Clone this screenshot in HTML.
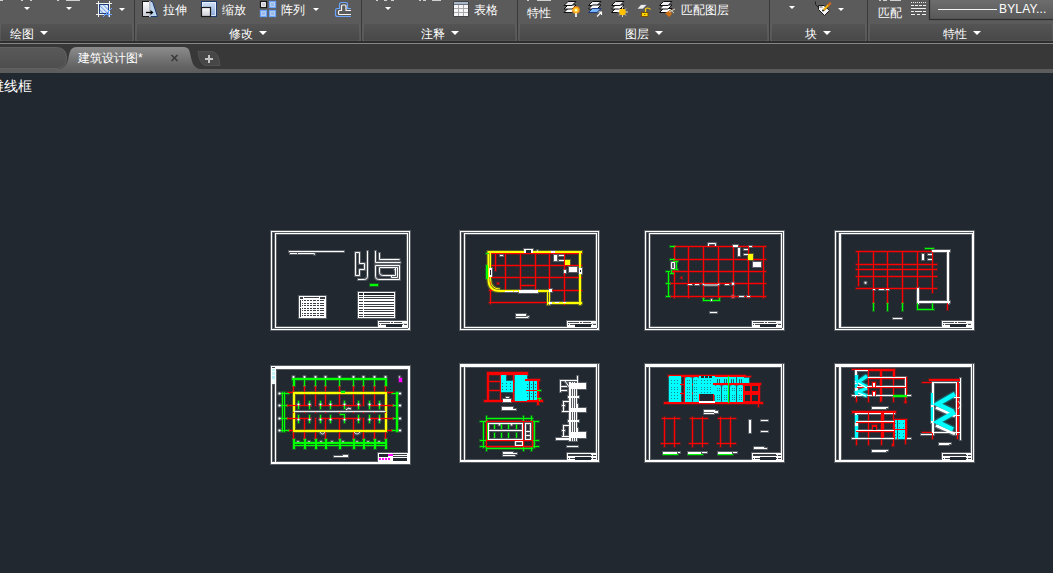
<!DOCTYPE html>
<html><head><meta charset="utf-8">
<style>
*{margin:0;padding:0;box-sizing:border-box}
html,body{width:1053px;height:573px;overflow:hidden;background:#212830;font-family:"Liberation Sans",sans-serif;position:relative}
.a{position:absolute}
.rib{left:0;top:0;width:1053px;height:41px;background:#5b5b5b}
.tb{top:24px;height:17px;background:linear-gradient(#545454,#484848);box-shadow:inset 1px 0 0 rgba(255,255,255,0.07),inset -1px 0 0 rgba(255,255,255,0.07),inset 0 -1px 0 rgba(255,255,255,0.06)}
.sep{top:0;width:1px;height:41px;background:#3a3a3a}
.sepl{top:24px;width:1px;height:17px;background:#5e5e5e}
.t{color:#fff;font-size:12px;line-height:12px;white-space:nowrap}
.arr{width:0;height:0;border-left:4px solid transparent;border-right:4px solid transparent;border-top:4px solid #fff}
.sarr{width:0;height:0;border-left:3px solid transparent;border-right:3px solid transparent;border-top:3px solid #fff}
</style></head><body>
<!-- ribbon -->
<div class="a rib"></div>
<div class="a tb" style="left:0;width:133px"></div>
<div class="a tb" style="left:136px;width:224px"></div>
<div class="a tb" style="left:363px;width:153px"></div>
<div class="a tb" style="left:519px;width:249px"></div>
<div class="a tb" style="left:771px;width:95px"></div>
<div class="a tb" style="left:869px;width:184px"></div>
<div class="a sep" style="left:134px"></div>
<div class="a sep" style="left:361px"></div>
<div class="a sep" style="left:517px"></div>
<div class="a sep" style="left:769px"></div>
<div class="a sep" style="left:867px"></div>

<!-- ribbon labels -->
<div class="a t" style="left:10px;top:28px">绘图</div><div class="a arr" style="left:40px;top:31px"></div>
<div class="a t" style="left:229px;top:28px">修改</div><div class="a arr" style="left:259px;top:31px"></div>
<div class="a t" style="left:421px;top:28px">注释</div><div class="a arr" style="left:451px;top:31px"></div>
<div class="a t" style="left:625px;top:28px">图层</div><div class="a arr" style="left:655px;top:31px"></div>
<div class="a t" style="left:805px;top:28px">块</div><div class="a arr" style="left:823px;top:31px"></div>
<div class="a t" style="left:943px;top:28px">特性</div><div class="a arr" style="left:973px;top:31px"></div>
<!-- ribbon buttons text -->
<div class="a t" style="left:163px;top:4px">拉伸</div>
<div class="a t" style="left:222px;top:4px">缩放</div>
<div class="a t" style="left:281px;top:4px">阵列</div>
<div class="a t" style="left:474px;top:4px">表格</div>
<div class="a t" style="left:681px;top:4px">匹配图层</div>
<div class="a t" style="left:527px;top:7px">特性</div>
<div class="a t" style="left:878px;top:7px">匹配</div>
<!-- small arrows -->
<div class="a sarr" style="left:24px;top:7px"></div>
<div class="a sarr" style="left:66px;top:7px"></div>
<div class="a sarr" style="left:119px;top:8px"></div>
<div class="a sarr" style="left:313px;top:8px"></div>
<div class="a sarr" style="left:385px;top:7px"></div>
<div class="a sarr" style="left:789px;top:6px"></div>
<div class="a sarr" style="left:838px;top:8px"></div>
<!-- icons -->
<svg class="a" style="left:0;top:0" width="1053" height="24" viewBox="0 0 1053 24">
<defs>
<linearGradient id="gw" x1="0" y1="0" x2="0" y2="1"><stop offset="0" stop-color="#ffffff"/><stop offset="1" stop-color="#c9ccd4"/></linearGradient>
<linearGradient id="gb" x1="0" y1="0" x2="0" y2="1"><stop offset="0" stop-color="#d4e2f4"/><stop offset="1" stop-color="#86a8dc"/></linearGradient>
<linearGradient id="gdd" x1="0" y1="0" x2="0" y2="1"><stop offset="0" stop-color="#6e6e6e"/><stop offset="1" stop-color="#585858"/></linearGradient>
<pattern id="hp" width="3" height="3" patternUnits="userSpaceOnUse" patternTransform="rotate(-45)"><rect width="3" height="3" fill="#f4f4f4"/><rect width="1.3" height="3" fill="#78a8f0"/></pattern>
</defs>
<!-- top fragments -->
<g fill="#d0d0d0">
<rect x="0" y="0" width="3" height="1"/><rect x="21" y="0" width="2" height="1"/><rect x="30" y="0" width="2" height="1"/><rect x="57" y="0" width="2" height="1"/><rect x="66" y="0" width="14" height="1"/>
<rect x="376" y="0" width="2" height="1"/><rect x="384" y="0" width="3" height="1"/><rect x="391" y="0" width="3" height="1"/><rect x="419" y="0" width="2" height="1"/><rect x="423" y="0" width="3" height="1"/><rect x="432" y="0" width="9" height="1"/>
<rect x="527" y="0" width="2" height="1"/><rect x="537" y="0" width="14" height="1"/>
<rect x="879" y="0" width="2" height="1"/><rect x="883" y="0" width="4" height="1"/><rect x="890" y="0" width="11" height="1"/>
</g>
<!-- hatch -->
<rect x="99.5" y="4.5" width="9" height="9" fill="url(#hp)" stroke="#1d3f7a" stroke-width="1"/>
<g stroke="#f2f2f2" stroke-width="1.2" shape-rendering="crispEdges">
<path d="M98.5 1 V17 M109.5 1 V17 M96 3.5 H112 M96 14.5 H112"/>
</g>
<path d="M103 17 L112 8" stroke="#6aa4ff" stroke-width="1"/>
<path d="M108.5 10 V17 M104 14.5 H112" stroke="#6aa4ff" stroke-width="1"/>
<!-- stretch -->
<rect x="142.5" y="1.5" width="7" height="15" fill="url(#gw)" stroke="#1a1a1a" stroke-width="1"/>
<path d="M150 1.5 H152.5 L157.5 16.5 H150 Z" fill="#bcd4ee" stroke="#1d3a70" stroke-width="1"/>
<rect x="149.3" y="1" width="1.2" height="16" fill="#fff"/>
<path d="M146 12.5 H151" stroke="#000" stroke-width="1.3"/>
<path d="M150.5 10 L153.5 12.5 L150.5 15 Z" fill="#000"/>
<!-- scale -->
<rect x="201.5" y="1.5" width="15" height="15" fill="url(#gb)" stroke="#1d3a70" stroke-width="1"/>
<rect x="202.5" y="2.5" width="13" height="13" fill="none" stroke="#eef4ff" stroke-width="0.8"/>
<rect x="201.5" y="7.5" width="9" height="9" fill="url(#gw)" stroke="#1a1a1a" stroke-width="1.2"/>
<!-- array -->
<rect x="260.5" y="1.5" width="6" height="6" fill="#fff" stroke="#1a1a1a" stroke-width="1.2"/>
<rect x="262" y="3" width="3" height="3" fill="#c8ccd4"/>
<g fill="#c4d8f2" stroke="#6aa2ff" stroke-width="1.3">
<rect x="269.5" y="1.5" width="6" height="6"/><rect x="260.5" y="10.5" width="6" height="6"/><rect x="269.5" y="10.5" width="6" height="6"/>
</g>
<g fill="#98b8e6"><rect x="271" y="3" width="3" height="3"/><rect x="262" y="12" width="3" height="3"/><rect x="271" y="12" width="3" height="3"/></g>
<!-- offset -->
<path d="M351 8.5 H347.5 V4.5 Q347.5 2.5 345.5 2.5 H341.5 Q339.5 2.5 339.5 4.5 V8.5 H337.5 Q335.5 8.5 335.5 10.5 V14.5 Q335.5 16.5 337.5 16.5 H351" fill="none" stroke="#6aa4ff" stroke-width="1.2"/>
<path d="M351 10.5 H346 V6 Q346 5 345 5 H342.5 Q341.5 5 341.5 6 V10.5 H339.5 Q338.5 10.5 338.5 11.5 V13.5 Q338.5 14.5 339.5 14.5 H351" fill="none" stroke="#f4f4f4" stroke-width="1.2"/>
<!-- table -->
<rect x="453.5" y="1.5" width="15" height="15" fill="#2a2e36"/>
<rect x="454" y="2" width="14" height="2.5" fill="#a9b5c9"/>
<rect x="454" y="5" width="14" height="11" fill="#a8a8a8"/>
<g fill="#f6f6f8">
<rect x="454" y="5" width="4" height="3"/><rect x="459" y="5" width="4" height="3"/><rect x="464" y="5" width="4" height="3"/>
<rect x="454" y="9" width="4" height="3"/><rect x="459" y="9" width="4" height="3"/><rect x="464" y="9" width="4" height="3"/>
<rect x="454" y="13" width="4" height="3"/><rect x="459" y="13" width="4" height="3"/><rect x="464" y="13" width="4" height="3"/>
</g>
<!-- layer 1 -->
<g stroke="#111" stroke-width="1">
<path d="M564 12.5 L568 8.5 H576 L572 12.5 Z" fill="#fff"/>
<path d="M564 9 L568 5 H576 L572 9 Z" fill="#fff"/>
<path d="M564 5.5 L568 1.5 H576 L572 5.5 Z" fill="#e8e8ee"/>
</g>
<circle cx="576" cy="10" r="3.2" fill="#ffd030" stroke="#f08a10" stroke-width="1.2"/>
<circle cx="576" cy="10.3" r="1" fill="#fff"/>
<rect x="575.2" y="13" width="1.6" height="4" fill="#fff"/>
<!-- layer 2 -->
<g stroke="#111" stroke-width="1">
<path d="M588.5 5.5 L592.5 1.5 H601 L597 5.5 Z" fill="#eef0f4"/>
<path d="M588.5 9 L592.5 5 H601 L597 9 Z" fill="#fff"/>
</g>
<path d="M588.5 12.5 L592.5 8.5 H601 L597 12.5 Z" fill="#78b4f4" stroke="#1d3a80" stroke-width="1"/>
<path d="M597 16.5 L601.5 12 M598.5 12 H601.5 V15" stroke="#fff" stroke-width="1.1" fill="none"/>
<!-- layer 3 sun -->
<g stroke="#111" stroke-width="1">
<path d="M611.5 12.5 L615.5 8.5 H624 L620 12.5 Z" fill="#fff"/>
<path d="M611.5 9 L615.5 5 H624 L620 9 Z" fill="#fff"/>
<path d="M611.5 5.5 L615.5 1.5 H624 L620 5.5 Z" fill="#eef0f4"/>
</g>
<path d="M622.5 6.5 V17 M617.5 12 H628 M619 8.5 L626 15.5 M626 8.5 L619 15.5" stroke="#f0f0f0" stroke-width="0.8"/>
<circle cx="622.5" cy="12" r="3.3" fill="#ffc000"/>
<!-- layer 4 lock -->
<path d="M637 9 L641 4.5 H647 L643 9 Z" fill="#eeeeee" stroke="#4a5060" stroke-width="0.6"/>
<rect x="641.5" y="12.5" width="6.5" height="4" fill="#ffd800" stroke="#7a5000" stroke-width="1"/>
<path d="M645.5 12 V9 Q645.5 8 647.5 8 Q649.5 8 650.5 9.5" stroke="#ffd000" stroke-width="1.2" fill="none"/>
<rect x="644.3" y="14" width="1" height="1" fill="#553300"/>
<!-- layer 5 brush -->
<g stroke="#111" stroke-width="1">
<path d="M659.5 12.5 L663.5 8.5 H672 L668 12.5 Z" fill="#fff"/>
<path d="M659.5 9 L663.5 5 H672 L668 9 Z" fill="#fff"/>
<path d="M659.5 5.5 L663.5 1.5 H672 L668 5.5 Z" fill="#eef0f4"/>
</g>
<path d="M665 13 L670 10.5 L672 14 L669 17 Z" fill="#d07010"/>
<path d="M669 12 L675 9 M670 9.5 L674 13" stroke="#f0e0c0" stroke-width="0.9"/>
<!-- block edit -->
<path d="M815.5 1.5 V4.5 L818.5 7.5" stroke="#222" stroke-width="1" fill="none"/>
<path d="M818.5 5.5 H824 L829.5 10.5 L824.5 15.5 L818.5 9.5 Z" fill="#f6f6f6" stroke="#1a1a1a" stroke-width="1"/>
<path d="M819.5 7 H822.5" stroke="#555" stroke-width="1"/>
<path d="M823.8 9.8 L828.6 5" stroke="#ffb800" stroke-width="2"/>
<path d="M823.8 11 L829.6 5.2" stroke="#8a5a10" stroke-width="0.7"/>
<path d="M828.2 5.4 L830.8 2.8" stroke="#d0681a" stroke-width="2.4"/>
<circle cx="823" cy="10.5" r="0.9" fill="#111"/>
<!-- linetype -->
<g fill="#eeeeee">
<rect x="911" y="2" width="1" height="1"/><rect x="913" y="2" width="1" height="1"/><rect x="915" y="2" width="1" height="1"/><rect x="917" y="2" width="1" height="1"/><rect x="919" y="2" width="1" height="1"/><rect x="921" y="2" width="1" height="1"/><rect x="923" y="2" width="1" height="1"/><rect x="925" y="2" width="1" height="1"/>
<rect x="911" y="5" width="3" height="1"/><rect x="915" y="5" width="3" height="1"/><rect x="919" y="5" width="3" height="1"/><rect x="923" y="5" width="3" height="1"/>
<rect x="911" y="8" width="15" height="1"/>
<rect x="911" y="11" width="3" height="1"/><rect x="915" y="11" width="7" height="1"/><rect x="923" y="11" width="3" height="1"/>
<rect x="911" y="14" width="4" height="1"/><rect x="917" y="14" width="3" height="1"/><rect x="922" y="14" width="4" height="1"/>
</g>
<!-- dropdown -->
<rect x="929.5" y="-1" width="130" height="20.5" fill="url(#gdd)" stroke="#2c2c2c" stroke-width="1.2"/>
<rect x="938" y="9" width="59" height="1" fill="#f4f4f4"/>
</svg>
<div class="a" style="left:999px;top:3px;color:#fff;font-size:12px;line-height:12px;letter-spacing:0.15px">BYLAY...</div>
<!-- bottom lines -->
<div class="a" style="left:0;top:41px;width:1053px;height:2px;background:#2e2e2e"></div>
<div class="a" style="left:0;top:43px;width:1053px;height:1px;background:#858585"></div>
<div class="a" style="left:0;top:44px;width:1053px;height:25px;background:#383838"></div>
<div class="a" style="left:0;top:69px;width:1053px;height:4px;background:#5c5c5c"></div>
<!-- tabs -->
<svg class="a" style="left:0;top:44px" width="240" height="29" viewBox="0 44 240 29">
<defs>
<linearGradient id="tg" x1="0" y1="0" x2="0" y2="1"><stop offset="0" stop-color="#8c8c8c"/><stop offset="0.75" stop-color="#646464"/><stop offset="1" stop-color="#5c5c5c"/></linearGradient>
<linearGradient id="tg2" x1="0" y1="0" x2="0" y2="1"><stop offset="0" stop-color="#595959"/><stop offset="1" stop-color="#4e4e4e"/></linearGradient>
</defs>
<path d="M-10 47.5 H56 Q66.5 47.5 66.5 58 Q66.5 68.5 56 68.5 H-10 Z" fill="url(#tg2)" stroke="#626262" stroke-width="1"/>
<path d="M56 69.5 Q66 69 68 60 Q69.5 51 71.5 49 Q73 47 77 47 H184 Q189 47 190 53 Q191 59 193 64 Q196 69 202 69.5 L202 73 H56 Z" fill="url(#tg)"/>
<path d="M198 51.5 H212 Q219 52 220 65.5 H205 Q199 63 198 51.5 Z" fill="#474747" stroke="#555" stroke-width="0.8"/>
<rect x="205" y="58" width="8" height="2" fill="#c4c4c4"/>
<rect x="208" y="55" width="2" height="8" fill="#c4c4c4"/>
<path d="M171.5 55 L177.5 61 M177.5 55 L171.5 61" stroke="#3a3a3a" stroke-width="1.6"/>
</svg>
<div class="a t" style="left:78px;top:52px">建筑设计图*</div>
<!-- canvas -->
<div class="a t" style="left:-10px;top:79px;font-size:14px;line-height:14px">维线框</div>
<!--DRAW--><svg class="a" style="left:0;top:0" width="1053" height="573" viewBox="0 0 1053 573"><defs><filter id="soft" x="-2%" y="-2%" width="104%" height="104%" color-interpolation-filters="sRGB"><feMorphology in="SourceGraphic" operator="dilate" radius="0.5" result="d"/><feComponentTransfer in="d" result="e"><feFuncA type="linear" slope="0.25"/></feComponentTransfer><feMerge><feMergeNode in="e"/><feMergeNode in="SourceGraphic"/></feMerge></filter></defs><g filter="url(#soft)"><rect x="271" y="231" width="139" height="1" fill="#ffffff"/><rect x="271" y="329" width="139" height="1" fill="#ffffff"/><rect x="271" y="231" width="1" height="99" fill="#ffffff"/><rect x="409" y="231" width="1" height="99" fill="#ffffff"/><rect x="275" y="233" width="133" height="1" fill="#ffffff"/><rect x="275" y="327" width="133" height="1" fill="#ffffff"/><rect x="275" y="233" width="1" height="95" fill="#ffffff"/><rect x="407" y="233" width="1" height="95" fill="#ffffff"/><rect x="408" y="328" width="1" height="1" fill="#ffffff"/><rect x="378" y="321" width="30" height="7" fill="#ffffff"/><rect x="379" y="322" width="11" height="1" fill="#4a4f55"/><rect x="391" y="322" width="2" height="1" fill="#4a4f55"/><rect x="394" y="322" width="8" height="1" fill="#4a4f55"/><rect x="379" y="324" width="1" height="1" fill="#4a4f55"/><rect x="381" y="324" width="5" height="1" fill="#4a4f55"/><rect x="386" y="324" width="16" height="3" fill="#212830"/><rect x="402" y="324" width="1" height="1" fill="#4a4f55"/><rect x="404" y="324" width="3" height="1" fill="#4a4f55"/><rect x="403" y="323" width="4" height="1" fill="#e0e0e0"/><rect x="289" y="251" width="55" height="1" fill="#ffffff"/><rect x="290" y="253" width="7" height="1" fill="#ffffff"/><rect x="298" y="253" width="16" height="1" fill="#ffffff"/><circle cx="314.5" cy="254" r="0.7" fill="#ffffff"/><path d="M355.5 252.5 H359.5 V263.5 H364.5 V269.5 H359.5 V275.5 H355.5 Z" fill="none" stroke="#ffffff" stroke-width="1"/><path d="M367.5 251 V276.5 Q367.5 279.5 364.5 279.5 H358" fill="none" stroke="#ffffff" stroke-width="1"/><path d="M375.5 251 V262.5 H400.5" fill="none" stroke="#ffffff" stroke-width="1"/><path d="M379.5 253 V259.5 H399.5" fill="none" stroke="#ffffff" stroke-width="1"/><path d="M375.5 265.5 H399.5 V279.5 H378.5 Q375.5 279.5 375.5 276.5 Z" fill="none" stroke="#ffffff" stroke-width="1"/><path d="M379.5 267.5 H395.5 V275.5 H382.5 Q379.5 275.5 379.5 272.5 Z" fill="none" stroke="#ffffff" stroke-width="1"/><path d="M391.5 275.5 V277.5 H397.5 V267.5 H395.5" fill="none" stroke="#ffffff" stroke-width="1"/><circle cx="395.3" cy="269.6" r="0.9" fill="#ffffff"/><rect x="370" y="284" width="8" height="2" fill="#00ff00"/><rect x="299" y="296" width="27" height="22" fill="#ffffff"/><rect x="300" y="297" width="3" height="2" fill="#3a3f46"/><rect x="304" y="297" width="6" height="1" fill="#3a3f46"/><rect x="310" y="297" width="9" height="1" fill="#3a3f46"/><rect x="320" y="297" width="5" height="2" fill="#3a3f46"/><rect x="302" y="300" width="1" height="1" fill="#3a3f46"/><rect x="304" y="300" width="2" height="1" fill="#3a3f46"/><rect x="307" y="300" width="2" height="1" fill="#3a3f46"/><rect x="310" y="300" width="2" height="1" fill="#3a3f46"/><rect x="313" y="300" width="3" height="1" fill="#3a3f46"/><rect x="317" y="300" width="2" height="1" fill="#3a3f46"/><rect x="320" y="300" width="4" height="1" fill="#3a3f46"/><rect x="302" y="303" width="1" height="1" fill="#3a3f46"/><rect x="304" y="303" width="2" height="1" fill="#3a3f46"/><rect x="307" y="303" width="2" height="1" fill="#3a3f46"/><rect x="310" y="303" width="2" height="1" fill="#3a3f46"/><rect x="313" y="303" width="3" height="1" fill="#3a3f46"/><rect x="317" y="303" width="2" height="1" fill="#3a3f46"/><rect x="320" y="303" width="4" height="1" fill="#3a3f46"/><rect x="302" y="305" width="1" height="1" fill="#3a3f46"/><rect x="304" y="305" width="2" height="1" fill="#3a3f46"/><rect x="307" y="305" width="2" height="1" fill="#3a3f46"/><rect x="310" y="305" width="2" height="1" fill="#3a3f46"/><rect x="313" y="305" width="3" height="1" fill="#3a3f46"/><rect x="317" y="305" width="2" height="1" fill="#3a3f46"/><rect x="320" y="305" width="4" height="1" fill="#3a3f46"/><rect x="302" y="308" width="1" height="1" fill="#3a3f46"/><rect x="304" y="308" width="2" height="1" fill="#3a3f46"/><rect x="307" y="308" width="2" height="1" fill="#3a3f46"/><rect x="310" y="308" width="2" height="1" fill="#3a3f46"/><rect x="313" y="308" width="3" height="1" fill="#3a3f46"/><rect x="317" y="308" width="2" height="1" fill="#3a3f46"/><rect x="320" y="308" width="4" height="1" fill="#3a3f46"/><rect x="302" y="310" width="1" height="1" fill="#3a3f46"/><rect x="304" y="310" width="2" height="1" fill="#3a3f46"/><rect x="307" y="310" width="2" height="1" fill="#3a3f46"/><rect x="310" y="310" width="2" height="1" fill="#3a3f46"/><rect x="313" y="310" width="3" height="1" fill="#3a3f46"/><rect x="317" y="310" width="2" height="1" fill="#3a3f46"/><rect x="320" y="310" width="4" height="1" fill="#3a3f46"/><rect x="302" y="313" width="1" height="1" fill="#3a3f46"/><rect x="304" y="313" width="2" height="1" fill="#3a3f46"/><rect x="307" y="313" width="2" height="1" fill="#3a3f46"/><rect x="310" y="313" width="2" height="1" fill="#3a3f46"/><rect x="313" y="313" width="3" height="1" fill="#3a3f46"/><rect x="317" y="313" width="2" height="1" fill="#3a3f46"/><rect x="320" y="313" width="4" height="1" fill="#3a3f46"/><rect x="302" y="315" width="1" height="1" fill="#3a3f46"/><rect x="304" y="315" width="2" height="1" fill="#3a3f46"/><rect x="307" y="315" width="2" height="1" fill="#3a3f46"/><rect x="310" y="315" width="2" height="1" fill="#3a3f46"/><rect x="313" y="315" width="3" height="1" fill="#3a3f46"/><rect x="317" y="315" width="2" height="1" fill="#3a3f46"/><rect x="320" y="315" width="4" height="1" fill="#3a3f46"/><rect x="300" y="300" width="1" height="7" fill="#3a3f46"/><rect x="300" y="308" width="1" height="9" fill="#3a3f46"/><rect x="358" y="292" width="37" height="26" fill="#ffffff"/><rect x="359" y="293" width="4" height="2" fill="#212830"/><rect x="364" y="293" width="30" height="2" fill="#212830"/><rect x="359" y="296" width="4" height="1" fill="#3a3f46"/><rect x="364" y="296" width="30" height="1" fill="#3a3f46"/><rect x="359" y="298" width="4" height="1" fill="#3a3f46"/><rect x="364" y="298" width="30" height="1" fill="#3a3f46"/><rect x="359" y="301" width="4" height="1" fill="#3a3f46"/><rect x="364" y="301" width="30" height="1" fill="#3a3f46"/><rect x="359" y="304" width="4" height="1" fill="#3a3f46"/><rect x="364" y="304" width="30" height="1" fill="#3a3f46"/><rect x="359" y="306" width="4" height="1" fill="#3a3f46"/><rect x="364" y="306" width="30" height="1" fill="#3a3f46"/><rect x="359" y="309" width="4" height="1" fill="#3a3f46"/><rect x="364" y="309" width="30" height="1" fill="#3a3f46"/><rect x="359" y="311" width="4" height="1" fill="#3a3f46"/><rect x="364" y="311" width="30" height="1" fill="#3a3f46"/><rect x="359" y="314" width="4" height="1" fill="#3a3f46"/><rect x="364" y="314" width="30" height="1" fill="#3a3f46"/><rect x="359" y="316" width="4" height="1" fill="#3a3f46"/><rect x="364" y="316" width="30" height="1" fill="#3a3f46"/><rect x="460" y="231" width="139" height="1" fill="#ffffff"/><rect x="460" y="329" width="139" height="1" fill="#ffffff"/><rect x="460" y="231" width="1" height="99" fill="#ffffff"/><rect x="598" y="231" width="1" height="99" fill="#ffffff"/><rect x="464" y="233" width="133" height="1" fill="#ffffff"/><rect x="464" y="327" width="133" height="1" fill="#ffffff"/><rect x="464" y="233" width="1" height="95" fill="#ffffff"/><rect x="596" y="233" width="1" height="95" fill="#ffffff"/><rect x="597" y="328" width="1" height="1" fill="#ffffff"/><rect x="567" y="321" width="30" height="7" fill="#ffffff"/><rect x="568" y="322" width="11" height="1" fill="#4a4f55"/><rect x="580" y="322" width="2" height="1" fill="#4a4f55"/><rect x="583" y="322" width="8" height="1" fill="#4a4f55"/><rect x="568" y="324" width="1" height="1" fill="#4a4f55"/><rect x="570" y="324" width="5" height="1" fill="#4a4f55"/><rect x="575" y="324" width="16" height="3" fill="#212830"/><rect x="591" y="324" width="1" height="1" fill="#4a4f55"/><rect x="593" y="324" width="3" height="1" fill="#4a4f55"/><rect x="592" y="323" width="4" height="1" fill="#e0e0e0"/><rect x="489" y="253" width="93" height="1" fill="#ff0000"/><rect x="489" y="265" width="93" height="1" fill="#ff0000"/><rect x="489" y="277" width="93" height="1" fill="#ff0000"/><rect x="489" y="290" width="93" height="1" fill="#ff0000"/><rect x="489" y="302" width="59" height="1" fill="#ff0000"/><rect x="505" y="253" width="1" height="38" fill="#ff0000"/><rect x="520" y="253" width="1" height="38" fill="#ff0000"/><rect x="535" y="253" width="1" height="38" fill="#ff0000"/><rect x="490" y="253" width="1" height="51" fill="#ff0000"/><rect x="495" y="253" width="1" height="18" fill="#ff0000"/><rect x="549" y="253" width="1" height="52" fill="#ff0000"/><rect x="564" y="253" width="1" height="52" fill="#ff0000"/><rect x="520" y="285" width="16" height="1" fill="#ff0000"/><rect x="488" y="251" width="94" height="2" fill="#ffff00"/><rect x="579" y="251" width="2" height="54" fill="#ffff00"/><rect x="547" y="302" width="35" height="2" fill="#ffff00"/><rect x="547" y="290" width="1" height="15" fill="#ffff00"/><rect x="549" y="290" width="1" height="15" fill="#ffff00"/><rect x="500" y="290" width="49" height="2" fill="#ffff00"/><path d="M488.5 251 V279 Q488.5 291 500 291" fill="none" stroke="#ffff00" stroke-width="2"/><path d="M490.5 253 V279 Q490.5 289 500 289" fill="none" stroke="#ffff00" stroke-width="1"/><rect x="486" y="265" width="2" height="14" fill="#00ff00"/><rect x="486" y="253" width="3" height="1" fill="#00ff00"/><rect x="524" y="249" width="9" height="4" fill="#ffffff"/><rect x="526" y="250" width="5" height="3" fill="#212830"/><circle cx="537.5" cy="251" r="0.8" fill="#ffffff"/><rect x="551" y="251" width="4" height="2" fill="#ffffff"/><rect x="500" y="255" width="3" height="1" fill="#ffffff"/><rect x="489" y="268" width="3" height="9" fill="#ffffff"/><rect x="490" y="270" width="1" height="5" fill="#212830"/><rect x="505" y="291" width="8" height="1" fill="#ffffff"/><rect x="514" y="291" width="4" height="1" fill="#ffffff"/><rect x="519" y="290" width="19" height="3" fill="#ffffff"/><rect x="549" y="289" width="3" height="3" fill="#ffffff"/><rect x="549" y="302" width="3" height="2" fill="#ffffff"/><rect x="555" y="302" width="4" height="1" fill="#ffffff"/><rect x="563" y="302" width="3" height="1" fill="#ffffff"/><rect x="554" y="255" width="3" height="6" fill="#ffffff"/><rect x="559" y="255" width="5" height="1" fill="#ffffff"/><rect x="559" y="260" width="5" height="1" fill="#ffffff"/><rect x="565" y="260" width="5" height="5" fill="#ffff00"/><rect x="569" y="267" width="8" height="5" fill="#ffffff"/><rect x="564" y="270" width="2" height="3" fill="#ffffff"/><rect x="579" y="268" width="3" height="6" fill="#ffffff"/><rect x="580" y="270" width="1" height="2" fill="#212830"/><circle cx="498" cy="283.5" r="1" fill="#ff0000"/><rect x="516" y="314" width="10" height="2" fill="#ffffff"/><rect x="516" y="317" width="12" height="1" fill="#ffffff"/><path d="M526 317.5 L529 316.5" fill="none" stroke="#ffffff" stroke-width="1"/><rect x="645" y="231" width="139" height="1" fill="#ffffff"/><rect x="645" y="329" width="139" height="1" fill="#ffffff"/><rect x="645" y="231" width="1" height="99" fill="#ffffff"/><rect x="783" y="231" width="1" height="99" fill="#ffffff"/><rect x="649" y="233" width="133" height="1" fill="#ffffff"/><rect x="649" y="327" width="133" height="1" fill="#ffffff"/><rect x="649" y="233" width="1" height="95" fill="#ffffff"/><rect x="781" y="233" width="1" height="95" fill="#ffffff"/><rect x="782" y="328" width="1" height="1" fill="#ffffff"/><rect x="752" y="321" width="30" height="7" fill="#ffffff"/><rect x="753" y="322" width="11" height="1" fill="#4a4f55"/><rect x="765" y="322" width="2" height="1" fill="#4a4f55"/><rect x="768" y="322" width="8" height="1" fill="#4a4f55"/><rect x="753" y="324" width="1" height="1" fill="#4a4f55"/><rect x="755" y="324" width="5" height="1" fill="#4a4f55"/><rect x="760" y="324" width="16" height="3" fill="#212830"/><rect x="776" y="324" width="1" height="1" fill="#4a4f55"/><rect x="778" y="324" width="3" height="1" fill="#4a4f55"/><rect x="777" y="323" width="4" height="1" fill="#e0e0e0"/><rect x="671" y="246" width="95" height="1" fill="#ff0000"/><rect x="671" y="259" width="95" height="1" fill="#ff0000"/><rect x="671" y="271" width="95" height="1" fill="#ff0000"/><rect x="671" y="283" width="95" height="1" fill="#ff0000"/><rect x="671" y="296" width="95" height="1" fill="#ff0000"/><rect x="674" y="246" width="1" height="52" fill="#ff0000"/><rect x="688" y="246" width="1" height="52" fill="#ff0000"/><rect x="703" y="246" width="1" height="52" fill="#ff0000"/><rect x="718" y="246" width="1" height="52" fill="#ff0000"/><rect x="733" y="246" width="1" height="52" fill="#ff0000"/><rect x="748" y="246" width="1" height="52" fill="#ff0000"/><rect x="763" y="246" width="1" height="52" fill="#ff0000"/><rect x="670" y="246" width="5" height="1" fill="#00ff00"/><rect x="670" y="259" width="5" height="1" fill="#00ff00"/><rect x="668" y="271" width="1" height="26" fill="#00ff00"/><rect x="666" y="271" width="4" height="1" fill="#00ff00"/><rect x="666" y="283" width="4" height="1" fill="#00ff00"/><rect x="666" y="296" width="4" height="1" fill="#00ff00"/><path d="M671.5 262.5 H674.5 V268.5 H671.5 Z" fill="none" stroke="#ffffff" stroke-width="1"/><rect x="676" y="261" width="1" height="9" fill="#00ff00"/><rect x="673" y="261" width="5" height="1" fill="#00ff00"/><rect x="673" y="269" width="5" height="1" fill="#00ff00"/><rect x="670" y="273" width="4" height="1" fill="#00ff00"/><rect x="671" y="270" width="1" height="4" fill="#00ff00"/><rect x="703" y="300" width="17" height="1" fill="#00ff00"/><rect x="703" y="298" width="1" height="3" fill="#00ff00"/><rect x="719" y="298" width="1" height="3" fill="#00ff00"/><rect x="711" y="299" width="1" height="2" fill="#ffffff"/><path d="M708.5 246 V243.5 H715.5 V246" fill="none" stroke="#ffffff" stroke-width="1"/><rect x="688" y="284" width="4" height="1" fill="#ffffff"/><rect x="695" y="284" width="4" height="1" fill="#ffffff"/><path d="M703 283.5 Q703 285 705 285 H717 Q719 285 719 283.5" fill="none" stroke="#ffffff" stroke-width="1.2"/><circle cx="681.5" cy="277.8" r="1" fill="#ff0000"/><rect x="725" y="284" width="4" height="1" fill="#ffffff"/><circle cx="733" cy="283.8" r="1.2" fill="#ffffff"/><rect x="739" y="296" width="5" height="1" fill="#ffffff"/><rect x="747" y="296" width="3" height="1" fill="#ffffff"/><circle cx="733" cy="296.5" r="1.3" fill="none" stroke="#ff6060" stroke-width="0.8"/><rect x="748" y="254" width="5" height="6" fill="#ffff00"/><rect x="753" y="262" width="8" height="5" fill="#ffffff"/><rect x="738" y="248" width="2" height="8" fill="#ffffff"/><rect x="744" y="249" width="4" height="1" fill="#ffffff"/><rect x="744" y="254" width="4" height="1" fill="#ffffff"/><rect x="733" y="245" width="5" height="2" fill="#ffffff"/><rect x="749" y="246" width="3" height="1" fill="#ffffff"/><rect x="710" y="312" width="7" height="1" fill="#ffffff"/><rect x="835" y="231" width="139" height="1" fill="#ffffff"/><rect x="835" y="329" width="139" height="1" fill="#ffffff"/><rect x="835" y="231" width="1" height="99" fill="#ffffff"/><rect x="973" y="231" width="1" height="99" fill="#ffffff"/><rect x="839" y="233" width="134" height="1" fill="#ffffff"/><rect x="839" y="327" width="134" height="1" fill="#ffffff"/><rect x="839" y="233" width="1" height="95" fill="#ffffff"/><rect x="972" y="233" width="1" height="95" fill="#ffffff"/><rect x="840" y="233" width="1" height="95" fill="#ffffff"/><rect x="972" y="328" width="1" height="1" fill="#ffffff"/><rect x="942" y="321" width="30" height="7" fill="#ffffff"/><rect x="943" y="322" width="11" height="1" fill="#4a4f55"/><rect x="955" y="322" width="2" height="1" fill="#4a4f55"/><rect x="958" y="322" width="8" height="1" fill="#4a4f55"/><rect x="943" y="324" width="1" height="1" fill="#4a4f55"/><rect x="945" y="324" width="5" height="1" fill="#4a4f55"/><rect x="950" y="324" width="16" height="3" fill="#212830"/><rect x="966" y="324" width="1" height="1" fill="#4a4f55"/><rect x="968" y="324" width="3" height="1" fill="#4a4f55"/><rect x="967" y="323" width="4" height="1" fill="#e0e0e0"/><rect x="856" y="251" width="81" height="1" fill="#ff0000"/><rect x="856" y="264" width="81" height="1" fill="#ff0000"/><rect x="856" y="269" width="81" height="1" fill="#ff0000"/><rect x="856" y="276" width="81" height="1" fill="#ff0000"/><rect x="856" y="288" width="81" height="1" fill="#ff0000"/><rect x="858" y="251" width="1" height="35" fill="#ff0000"/><rect x="873" y="251" width="1" height="52" fill="#ff0000"/><rect x="873" y="303" width="1" height="8" fill="#00ff00"/><rect x="887" y="251" width="1" height="52" fill="#ff0000"/><rect x="887" y="303" width="1" height="8" fill="#00ff00"/><rect x="902" y="251" width="1" height="52" fill="#ff0000"/><rect x="902" y="303" width="1" height="8" fill="#00ff00"/><rect x="917" y="251" width="1" height="42" fill="#ff0000"/><rect x="932" y="251" width="1" height="42" fill="#ff0000"/><circle cx="865.5" cy="282.8" r="1" fill="#ffffff"/><rect x="873" y="289" width="2" height="1" fill="#ffffff"/><rect x="879" y="289" width="5" height="1" fill="#ffffff"/><rect x="886" y="289" width="3" height="1" fill="#ffffff"/><rect x="893" y="318" width="9" height="1" fill="#ffffff"/><rect x="932" y="250" width="18" height="2" fill="#ffffff"/><rect x="947" y="250" width="2" height="54" fill="#ffffff"/><rect x="917" y="301" width="33" height="2" fill="#ffffff"/><rect x="917" y="288" width="2" height="16" fill="#ffffff"/><rect x="925" y="248" width="9" height="1" fill="#00ff00"/><rect x="917" y="309" width="17" height="1" fill="#00ff00"/><rect x="917" y="303" width="1" height="7" fill="#00ff00"/><rect x="932" y="303" width="1" height="7" fill="#00ff00"/><rect x="947" y="303" width="1" height="7" fill="#ff0000"/><rect x="922" y="254" width="2" height="6" fill="#ffffff"/><rect x="928" y="254" width="4" height="1" fill="#ffffff"/><rect x="928" y="259" width="4" height="1" fill="#ffffff"/><rect x="271" y="366" width="139" height="3" fill="#ffffff"/><rect x="271" y="366" width="1" height="98" fill="#ffffff"/><rect x="275" y="366" width="1" height="98" fill="#ffffff"/><rect x="272" y="369" width="3" height="15" fill="#f0fafa"/><rect x="272" y="367" width="3" height="1" fill="#40484f"/><rect x="272" y="369" width="3" height="2" fill="#c8f4f8"/><rect x="272" y="372" width="3" height="3" fill="#c8f4f8"/><rect x="272" y="376" width="3" height="3" fill="#b0f0f4"/><rect x="408" y="366" width="2" height="98" fill="#ffffff"/><rect x="271" y="462" width="139" height="2" fill="#ffffff"/><rect x="292" y="378" width="95" height="2" fill="#00ff00"/><rect x="293" y="378" width="2" height="8" fill="#00ff00"/><circle cx="293.5" cy="377" r="1.1" fill="#ffffff"/><rect x="293" y="386" width="1" height="20" fill="#ff0000"/><rect x="293" y="418" width="1" height="23" fill="#ff0000"/><rect x="304" y="378" width="1" height="8" fill="#00ff00"/><circle cx="304.5" cy="377" r="1.1" fill="#ffffff"/><rect x="304" y="386" width="1" height="20" fill="#ff0000"/><rect x="304" y="418" width="1" height="23" fill="#ff0000"/><rect x="315" y="378" width="1" height="8" fill="#00ff00"/><circle cx="315.5" cy="377" r="1.1" fill="#ffffff"/><rect x="315" y="386" width="1" height="20" fill="#ff0000"/><rect x="315" y="418" width="1" height="23" fill="#ff0000"/><rect x="325" y="378" width="1" height="8" fill="#00ff00"/><circle cx="325.5" cy="377" r="1.1" fill="#ffffff"/><rect x="325" y="386" width="1" height="20" fill="#ff0000"/><rect x="325" y="418" width="1" height="23" fill="#ff0000"/><rect x="339" y="378" width="1" height="8" fill="#00ff00"/><circle cx="339.5" cy="377" r="1.1" fill="#ffffff"/><rect x="339" y="386" width="1" height="20" fill="#ff0000"/><rect x="339" y="418" width="1" height="23" fill="#ff0000"/><rect x="353" y="378" width="1" height="8" fill="#00ff00"/><circle cx="353.5" cy="377" r="1.1" fill="#ffffff"/><rect x="353" y="386" width="1" height="20" fill="#ff0000"/><rect x="353" y="418" width="1" height="23" fill="#ff0000"/><rect x="363" y="378" width="1" height="8" fill="#00ff00"/><circle cx="363.5" cy="377" r="1.1" fill="#ffffff"/><rect x="363" y="386" width="1" height="20" fill="#ff0000"/><rect x="363" y="418" width="1" height="23" fill="#ff0000"/><rect x="374" y="378" width="1" height="8" fill="#00ff00"/><circle cx="374.5" cy="377" r="1.1" fill="#ffffff"/><rect x="374" y="386" width="1" height="20" fill="#ff0000"/><rect x="374" y="418" width="1" height="23" fill="#ff0000"/><rect x="385" y="378" width="2" height="8" fill="#00ff00"/><circle cx="385.5" cy="377" r="1.1" fill="#ffffff"/><rect x="385" y="386" width="1" height="20" fill="#ff0000"/><rect x="385" y="418" width="1" height="23" fill="#ff0000"/><rect x="293" y="392" width="94" height="2" fill="#ffff00"/><rect x="293" y="430" width="94" height="2" fill="#ffff00"/><rect x="293" y="392" width="2" height="40" fill="#ffff00"/><rect x="385" y="392" width="2" height="40" fill="#ffff00"/><rect x="288" y="392" width="5" height="1" fill="#ff0000"/><rect x="387" y="392" width="6" height="1" fill="#ff0000"/><rect x="288" y="430" width="5" height="1" fill="#ff0000"/><rect x="387" y="430" width="6" height="1" fill="#ff0000"/><rect x="282" y="392" width="1" height="40" fill="#00ff00"/><rect x="284" y="392" width="1" height="40" fill="#00ff00"/><rect x="396" y="392" width="2" height="40" fill="#00ff00"/><rect x="279" y="393" width="10" height="1" fill="#00ff00"/><rect x="392" y="393" width="8" height="1" fill="#00ff00"/><circle cx="279.5" cy="393.5" r="1.1" fill="#ffffff"/><circle cx="400" cy="393.5" r="1.1" fill="#ffffff"/><rect x="279" y="405" width="10" height="1" fill="#00ff00"/><rect x="392" y="405" width="8" height="1" fill="#00ff00"/><circle cx="279.5" cy="405.5" r="1.1" fill="#ffffff"/><circle cx="400" cy="405.5" r="1.1" fill="#ffffff"/><rect x="279" y="418" width="10" height="1" fill="#00ff00"/><rect x="392" y="418" width="8" height="1" fill="#00ff00"/><circle cx="279.5" cy="418.5" r="1.1" fill="#ffffff"/><circle cx="400" cy="418.5" r="1.1" fill="#ffffff"/><rect x="279" y="430" width="10" height="1" fill="#00ff00"/><rect x="392" y="430" width="8" height="1" fill="#00ff00"/><circle cx="279.5" cy="430.5" r="1.1" fill="#ffffff"/><circle cx="400" cy="430.5" r="1.1" fill="#ffffff"/><rect x="287" y="405" width="24" height="1" fill="#ff0000"/><rect x="319" y="405" width="42" height="1" fill="#ff0000"/><rect x="369" y="405" width="24" height="1" fill="#ff0000"/><rect x="287" y="418" width="24" height="1" fill="#ff0000"/><rect x="319" y="418" width="42" height="1" fill="#ff0000"/><rect x="369" y="418" width="24" height="1" fill="#ff0000"/><rect x="294" y="411" width="92" height="1" fill="#e8e8e8"/><rect x="293" y="412" width="1" height="1" fill="#ff0000"/><rect x="304" y="412" width="1" height="1" fill="#ff0000"/><rect x="315" y="412" width="1" height="1" fill="#ff0000"/><rect x="325" y="412" width="1" height="1" fill="#ff0000"/><rect x="339" y="412" width="1" height="1" fill="#ff0000"/><rect x="353" y="412" width="1" height="1" fill="#ff0000"/><rect x="363" y="412" width="1" height="1" fill="#ff0000"/><rect x="374" y="412" width="1" height="1" fill="#ff0000"/><rect x="385" y="412" width="1" height="1" fill="#ff0000"/><rect x="298" y="401" width="1" height="8" fill="#00ff00"/><rect x="298" y="415" width="1" height="8" fill="#00ff00"/><circle cx="298.5" cy="404.5" r="1.1" fill="#ffffff"/><circle cx="298.5" cy="419.5" r="1.1" fill="#ffffff"/><rect x="309" y="401" width="1" height="8" fill="#00ff00"/><rect x="309" y="415" width="1" height="8" fill="#00ff00"/><circle cx="309.5" cy="404.5" r="1.1" fill="#ffffff"/><circle cx="309.5" cy="419.5" r="1.1" fill="#ffffff"/><rect x="320" y="401" width="1" height="8" fill="#00ff00"/><rect x="320" y="415" width="1" height="8" fill="#00ff00"/><circle cx="320.5" cy="404.5" r="1.1" fill="#ffffff"/><circle cx="320.5" cy="419.5" r="1.1" fill="#ffffff"/><rect x="330" y="401" width="1" height="8" fill="#00ff00"/><rect x="330" y="415" width="1" height="8" fill="#00ff00"/><circle cx="330.5" cy="404.5" r="1.1" fill="#ffffff"/><circle cx="330.5" cy="419.5" r="1.1" fill="#ffffff"/><rect x="344" y="401" width="1" height="8" fill="#00ff00"/><rect x="344" y="415" width="1" height="8" fill="#00ff00"/><circle cx="344.5" cy="404.5" r="1.1" fill="#ffffff"/><circle cx="344.5" cy="419.5" r="1.1" fill="#ffffff"/><rect x="358" y="401" width="1" height="8" fill="#00ff00"/><rect x="358" y="415" width="1" height="8" fill="#00ff00"/><circle cx="358.5" cy="404.5" r="1.1" fill="#ffffff"/><circle cx="358.5" cy="419.5" r="1.1" fill="#ffffff"/><rect x="369" y="401" width="1" height="8" fill="#00ff00"/><rect x="369" y="415" width="1" height="8" fill="#00ff00"/><circle cx="369.5" cy="404.5" r="1.1" fill="#ffffff"/><circle cx="369.5" cy="419.5" r="1.1" fill="#ffffff"/><rect x="379" y="401" width="1" height="8" fill="#00ff00"/><rect x="379" y="415" width="1" height="8" fill="#00ff00"/><circle cx="379.5" cy="404.5" r="1.1" fill="#ffffff"/><circle cx="379.5" cy="419.5" r="1.1" fill="#ffffff"/><path d="M320 432 Q322.5 436 325 432" fill="none" stroke="#ffffff" stroke-width="0.8"/><path d="M354 432 Q357 436 360 432" fill="none" stroke="#ffffff" stroke-width="0.8"/><rect x="341" y="391" width="4" height="2" fill="#00ff00"/><rect x="340" y="414" width="5" height="1" fill="#00ff00"/><path d="M346 410 Q348 407 351 409" fill="none" stroke="#ffffff" stroke-width="1"/><rect x="399" y="378" width="3" height="4" fill="#ff00ff"/><circle cx="399.5" cy="377" r="0.8" fill="#ffffff"/><rect x="293" y="442" width="94" height="2" fill="#00ff00"/><rect x="293" y="445" width="94" height="1" fill="#00ff00"/><rect x="293" y="439" width="2" height="10" fill="#00ff00"/><rect x="304" y="439" width="2" height="10" fill="#00ff00"/><rect x="315" y="439" width="2" height="10" fill="#00ff00"/><rect x="325" y="439" width="2" height="10" fill="#00ff00"/><rect x="339" y="439" width="2" height="10" fill="#00ff00"/><rect x="353" y="439" width="2" height="10" fill="#00ff00"/><rect x="363" y="439" width="2" height="10" fill="#00ff00"/><rect x="374" y="439" width="2" height="10" fill="#00ff00"/><rect x="385" y="439" width="2" height="10" fill="#00ff00"/><circle cx="298" cy="441.5" r="0.7" fill="#ffffff"/><circle cx="309" cy="441.5" r="0.7" fill="#ffffff"/><circle cx="321" cy="441.5" r="0.7" fill="#ffffff"/><circle cx="332" cy="441.5" r="0.7" fill="#ffffff"/><circle cx="343" cy="441.5" r="0.7" fill="#ffffff"/><circle cx="357" cy="441.5" r="0.7" fill="#ffffff"/><circle cx="368" cy="441.5" r="0.7" fill="#ffffff"/><circle cx="379" cy="441.5" r="0.7" fill="#ffffff"/><rect x="334" y="456" width="10" height="1" fill="#ffffff"/><rect x="343" y="455" width="5" height="2" fill="#ffffff"/><rect x="378" y="453" width="30" height="9" fill="#ffffff"/><rect x="379" y="454" width="9" height="3" fill="#212830"/><rect x="388" y="454" width="5" height="2" fill="#ff00ff"/><rect x="393" y="454" width="14" height="1" fill="#3a3f46"/><rect x="393" y="456" width="14" height="1" fill="#3a3f46"/><rect x="379" y="458" width="2" height="2" fill="#ff00ff"/><rect x="382" y="458" width="2" height="2" fill="#ff00ff"/><rect x="385" y="458" width="2" height="2" fill="#ff00ff"/><rect x="388" y="458" width="2" height="2" fill="#ff00ff"/><rect x="393" y="458" width="14" height="3" fill="#212830"/><rect x="460" y="364" width="139" height="3" fill="#ffffff"/><rect x="460" y="364" width="1" height="98" fill="#ffffff"/><rect x="464" y="364" width="1" height="98" fill="#ffffff"/><rect x="596" y="364" width="1" height="98" fill="#ffffff"/><rect x="598" y="364" width="1" height="98" fill="#ffffff"/><rect x="597" y="364" width="1" height="98" fill="#5a5e64"/><rect x="460" y="460" width="139" height="2" fill="#ffffff"/><rect x="567" y="453" width="30" height="8" fill="#ffffff"/><rect x="568" y="454" width="10" height="2" fill="#3a3f46"/><rect x="578" y="454" width="4" height="2" fill="#3a3f46"/><rect x="582" y="454" width="9" height="2" fill="#3a3f46"/><rect x="591" y="455" width="1" height="1" fill="#3a3f46"/><rect x="593" y="455" width="3" height="1" fill="#3a3f46"/><rect x="575" y="457" width="16" height="3" fill="#212830"/><rect x="568" y="458" width="1" height="1" fill="#3a3f46"/><rect x="570" y="458" width="5" height="1" fill="#3a3f46"/><rect x="591" y="458" width="1" height="1" fill="#3a3f46"/><rect x="593" y="458" width="3" height="1" fill="#3a3f46"/><rect x="487" y="372" width="41" height="3" fill="#ff0000"/><rect x="487" y="372" width="2" height="30" fill="#ff0000"/><rect x="484" y="400" width="59" height="2" fill="#ff0000"/><rect x="488" y="381" width="39" height="1" fill="#ff0000"/><rect x="488" y="390" width="39" height="1" fill="#ff0000"/><rect x="500" y="374" width="1" height="27" fill="#ff0000"/><rect x="513" y="374" width="1" height="27" fill="#ff0000"/><rect x="501" y="375" width="5" height="7" fill="#00ffff"/><rect x="501" y="381" width="12" height="11" fill="#00ffff"/><rect x="515" y="375" width="12" height="26" fill="#00ffff"/><rect x="525" y="379" width="15" height="2" fill="#ff0000"/><rect x="526" y="381" width="3" height="19" fill="#00ffff"/><rect x="530" y="381" width="3" height="19" fill="#00ffff"/><rect x="534" y="381" width="3" height="19" fill="#00ffff"/><rect x="526" y="390" width="12" height="1" fill="#ff0000"/><rect x="537" y="380" width="2" height="25" fill="#ff0000"/><rect x="537" y="390" width="4" height="1" fill="#00ff00"/><rect x="537" y="398" width="4" height="1" fill="#00ff00"/><rect x="539" y="398" width="1" height="3" fill="#00ff00"/><rect x="503" y="399" width="8" height="3" fill="#ffffff"/><rect x="506" y="397" width="3" height="1" fill="#ffffff"/><rect x="502" y="383" width="1" height="1" fill="#1a6a70"/><rect x="506" y="383" width="1" height="1" fill="#1a6a70"/><rect x="510" y="383" width="1" height="1" fill="#1a6a70"/><rect x="502" y="386" width="1" height="1" fill="#1a6a70"/><rect x="506" y="386" width="1" height="1" fill="#1a6a70"/><rect x="510" y="386" width="1" height="1" fill="#1a6a70"/><rect x="502" y="389" width="1" height="1" fill="#1a6a70"/><rect x="506" y="389" width="1" height="1" fill="#1a6a70"/><rect x="510" y="389" width="1" height="1" fill="#1a6a70"/><rect x="527" y="384" width="1" height="1" fill="#1a6a70"/><rect x="527" y="387" width="1" height="1" fill="#1a6a70"/><rect x="527" y="393" width="1" height="1" fill="#1a6a70"/><rect x="527" y="396" width="1" height="1" fill="#1a6a70"/><rect x="531" y="384" width="1" height="1" fill="#1a6a70"/><rect x="531" y="387" width="1" height="1" fill="#1a6a70"/><rect x="531" y="393" width="1" height="1" fill="#1a6a70"/><rect x="531" y="396" width="1" height="1" fill="#1a6a70"/><rect x="535" y="384" width="1" height="1" fill="#1a6a70"/><rect x="535" y="387" width="1" height="1" fill="#1a6a70"/><rect x="535" y="393" width="1" height="1" fill="#1a6a70"/><rect x="535" y="396" width="1" height="1" fill="#1a6a70"/><rect x="502" y="407" width="11" height="3" fill="#ffffff"/><rect x="513" y="409" width="3" height="1" fill="#ffffff"/><rect x="486" y="418" width="47" height="1" fill="#00ff00"/><rect x="486" y="416" width="1" height="6" fill="#00ff00"/><rect x="523" y="416" width="1" height="6" fill="#00ff00"/><rect x="531" y="416" width="1" height="6" fill="#00ff00"/><rect x="486" y="448" width="47" height="1" fill="#00ff00"/><rect x="486" y="446" width="1" height="5" fill="#00ff00"/><rect x="523" y="446" width="1" height="5" fill="#00ff00"/><rect x="531" y="446" width="1" height="5" fill="#00ff00"/><rect x="483" y="421" width="1" height="27" fill="#00ff00"/><rect x="534" y="421" width="1" height="27" fill="#00ff00"/><rect x="480" y="421" width="7" height="1" fill="#00ff00"/><rect x="532" y="421" width="7" height="1" fill="#00ff00"/><rect x="480" y="440" width="7" height="1" fill="#00ff00"/><rect x="532" y="440" width="7" height="1" fill="#00ff00"/><rect x="480" y="446" width="7" height="1" fill="#00ff00"/><rect x="532" y="446" width="7" height="1" fill="#00ff00"/><rect x="486" y="421" width="47" height="1" fill="#ff0000"/><rect x="486" y="446" width="47" height="1" fill="#ff0000"/><rect x="486" y="421" width="1" height="26" fill="#ff0000"/><rect x="532" y="421" width="1" height="26" fill="#ff0000"/><rect x="486" y="440" width="47" height="1" fill="#ff0000"/><rect x="523" y="421" width="1" height="26" fill="#ff0000"/><rect x="488" y="423" width="35" height="1" fill="#ffffff"/><rect x="488" y="439" width="35" height="1" fill="#ffffff"/><rect x="488" y="423" width="1" height="17" fill="#ffffff"/><rect x="522" y="423" width="1" height="17" fill="#ffffff"/><rect x="488" y="430" width="35" height="1" fill="#ffffff"/><rect x="525" y="423" width="6" height="1" fill="#ffffff"/><rect x="525" y="439" width="6" height="1" fill="#ffffff"/><rect x="525" y="423" width="1" height="17" fill="#ffffff"/><rect x="530" y="423" width="1" height="17" fill="#ffffff"/><rect x="525" y="431" width="6" height="1" fill="#ffffff"/><rect x="525" y="435" width="6" height="1" fill="#ffffff"/><rect x="494" y="424" width="1" height="5" fill="#00ff00"/><rect x="494" y="433" width="1" height="5" fill="#00ff00"/><rect x="501" y="424" width="1" height="5" fill="#00ff00"/><rect x="501" y="433" width="1" height="5" fill="#00ff00"/><rect x="508" y="424" width="1" height="5" fill="#00ff00"/><rect x="508" y="433" width="1" height="5" fill="#00ff00"/><rect x="516" y="424" width="1" height="5" fill="#00ff00"/><rect x="516" y="433" width="1" height="5" fill="#00ff00"/><circle cx="499.5" cy="424.5" r="0.9" fill="#ffffff"/><circle cx="511.5" cy="424.5" r="0.9" fill="#ffffff"/><rect x="515" y="441" width="8" height="1" fill="#ffffff"/><rect x="515" y="445" width="8" height="1" fill="#ffffff"/><rect x="515" y="441" width="1" height="5" fill="#ffffff"/><rect x="522" y="441" width="1" height="5" fill="#ffffff"/><rect x="487" y="423" width="1" height="17" fill="#00ff00"/><rect x="503" y="452" width="10" height="2" fill="#ffffff"/><rect x="503" y="455" width="12" height="1" fill="#ffffff"/><rect x="513" y="453" width="4" height="1" fill="#ffffff"/><rect x="569" y="382" width="2" height="59" fill="#ffffff"/><rect x="572" y="382" width="1" height="59" fill="#ffffff"/><rect x="574" y="382" width="1" height="59" fill="#ffffff"/><rect x="576" y="388" width="1" height="53" fill="#ffffff"/><rect x="570" y="383" width="16" height="6" fill="#ffffff"/><rect x="570" y="408" width="16" height="4" fill="#ffffff"/><rect x="570" y="432" width="16" height="6" fill="#ffffff"/><rect x="577" y="376" width="1" height="8" fill="#ffffff"/><rect x="577" y="404" width="1" height="5" fill="#ffffff"/><rect x="577" y="428" width="1" height="5" fill="#ffffff"/><rect x="560" y="380" width="1" height="12" fill="#ffffff"/><rect x="560" y="380" width="17" height="1" fill="#ffffff"/><rect x="560" y="386" width="7" height="1" fill="#ffffff"/><rect x="560" y="390" width="7" height="1" fill="#ffffff"/><path d="M565 381 L570 388" fill="none" stroke="#ffffff" stroke-width="1"/><rect x="563" y="401" width="1" height="11" fill="#ffffff"/><rect x="563" y="401" width="8" height="1" fill="#ffffff"/><rect x="562" y="405" width="3" height="1" fill="#ffffff"/><rect x="562" y="411" width="9" height="1" fill="#ffffff"/><rect x="563" y="425" width="1" height="12" fill="#ffffff"/><rect x="563" y="425" width="8" height="1" fill="#ffffff"/><rect x="562" y="430" width="3" height="1" fill="#ffffff"/><rect x="562" y="436" width="9" height="1" fill="#ffffff"/><rect x="568" y="396" width="11" height="2" fill="#ffffff"/><rect x="568" y="420" width="11" height="2" fill="#ffffff"/><rect x="556" y="438" width="15" height="2" fill="#ffffff"/><rect x="567" y="446" width="11" height="1" fill="#ffffff"/><rect x="645" y="364" width="139" height="3" fill="#ffffff"/><rect x="645" y="364" width="1" height="98" fill="#ffffff"/><rect x="649" y="364" width="1" height="98" fill="#ffffff"/><rect x="781" y="364" width="1" height="98" fill="#ffffff"/><rect x="783" y="364" width="1" height="98" fill="#ffffff"/><rect x="782" y="364" width="1" height="98" fill="#5a5e64"/><rect x="645" y="460" width="139" height="2" fill="#ffffff"/><rect x="752" y="453" width="30" height="8" fill="#ffffff"/><rect x="753" y="454" width="10" height="2" fill="#3a3f46"/><rect x="763" y="454" width="4" height="2" fill="#3a3f46"/><rect x="767" y="454" width="9" height="2" fill="#3a3f46"/><rect x="776" y="455" width="1" height="1" fill="#3a3f46"/><rect x="778" y="455" width="3" height="1" fill="#3a3f46"/><rect x="760" y="457" width="16" height="3" fill="#212830"/><rect x="753" y="458" width="1" height="1" fill="#3a3f46"/><rect x="755" y="458" width="5" height="1" fill="#3a3f46"/><rect x="776" y="458" width="1" height="1" fill="#3a3f46"/><rect x="778" y="458" width="3" height="1" fill="#3a3f46"/><rect x="668" y="375" width="78" height="2" fill="#ff0000"/><rect x="664" y="402" width="99" height="2" fill="#ff0000"/><rect x="669" y="376" width="12" height="26" fill="#00ffff"/><rect x="684" y="376" width="1" height="27" fill="#ff0000"/><rect x="680" y="384" width="81" height="1" fill="#ff0000"/><rect x="680" y="393" width="34" height="1" fill="#ff0000"/><path d="M685 402 V379 Q685 377 688.5 377 Q692 377 692 379 V402 Z" fill="#00ffff"/><path d="M693 402 V379 Q693 377 696.0 377 Q699 377 699 379 V402 Z" fill="#00ffff"/><rect x="699" y="376" width="16" height="19" fill="#00ffff"/><rect x="701" y="376" width="3" height="2" fill="#212830"/><rect x="705" y="376" width="3" height="2" fill="#212830"/><rect x="709" y="376" width="3" height="2" fill="#212830"/><rect x="699" y="394" width="1" height="9" fill="#ff0000"/><rect x="713" y="394" width="1" height="9" fill="#ff0000"/><rect x="699" y="401" width="16" height="2" fill="#ffffff"/><rect x="715" y="377" width="7" height="7" fill="#00ffff"/><rect x="717" y="379" width="1" height="4" fill="#1a6a70"/><rect x="719" y="379" width="1" height="4" fill="#1a6a70"/><rect x="722" y="377" width="7" height="7" fill="#00ffff"/><rect x="724" y="379" width="1" height="4" fill="#1a6a70"/><rect x="726" y="379" width="1" height="4" fill="#1a6a70"/><rect x="729" y="377" width="7" height="7" fill="#00ffff"/><rect x="731" y="379" width="1" height="4" fill="#1a6a70"/><rect x="733" y="379" width="1" height="4" fill="#1a6a70"/><rect x="737" y="377" width="7" height="7" fill="#00ffff"/><rect x="739" y="379" width="1" height="4" fill="#1a6a70"/><rect x="741" y="379" width="1" height="4" fill="#1a6a70"/><rect x="744" y="378" width="5" height="6" fill="#00ffff"/><rect x="745" y="376" width="6" height="1" fill="#ff0000"/><rect x="713" y="383" width="48" height="2" fill="#ff0000"/><path d="M715 402 V387 Q715 385 718.0 385 Q721 385 721 387 V402 Z" fill="#00ffff"/><path d="M722 402 V387 Q722 385 725.5 385 Q729 385 729 387 V402 Z" fill="#00ffff"/><path d="M730 402 V387 Q730 385 733.0 385 Q736 385 736 387 V402 Z" fill="#00ffff"/><path d="M737 402 V387 Q737 385 740.5 385 Q744 385 744 387 V402 Z" fill="#00ffff"/><rect x="728" y="376" width="1" height="27" fill="#00ff00"/><rect x="743" y="384" width="17" height="19" fill="#ff0000"/><rect x="745" y="386" width="5" height="5" fill="#212830"/><rect x="752" y="386" width="6" height="5" fill="#212830"/><rect x="745" y="395" width="5" height="6" fill="#212830"/><rect x="752" y="395" width="6" height="6" fill="#212830"/><rect x="758" y="384" width="1" height="23" fill="#ff0000"/><rect x="671" y="380" width="1" height="1" fill="#1a8a90"/><rect x="671" y="383" width="1" height="1" fill="#1a8a90"/><rect x="671" y="387" width="1" height="1" fill="#1a8a90"/><rect x="671" y="389" width="1" height="1" fill="#1a8a90"/><rect x="671" y="392" width="1" height="1" fill="#1a8a90"/><rect x="671" y="395" width="1" height="1" fill="#1a8a90"/><rect x="671" y="398" width="1" height="1" fill="#1a8a90"/><rect x="674" y="380" width="1" height="1" fill="#1a8a90"/><rect x="674" y="383" width="1" height="1" fill="#1a8a90"/><rect x="674" y="387" width="1" height="1" fill="#1a8a90"/><rect x="674" y="389" width="1" height="1" fill="#1a8a90"/><rect x="674" y="392" width="1" height="1" fill="#1a8a90"/><rect x="674" y="395" width="1" height="1" fill="#1a8a90"/><rect x="674" y="398" width="1" height="1" fill="#1a8a90"/><rect x="677" y="380" width="1" height="1" fill="#1a8a90"/><rect x="677" y="383" width="1" height="1" fill="#1a8a90"/><rect x="677" y="387" width="1" height="1" fill="#1a8a90"/><rect x="677" y="389" width="1" height="1" fill="#1a8a90"/><rect x="677" y="392" width="1" height="1" fill="#1a8a90"/><rect x="677" y="395" width="1" height="1" fill="#1a8a90"/><rect x="677" y="398" width="1" height="1" fill="#1a8a90"/><rect x="687" y="380" width="1" height="1" fill="#1a8a90"/><rect x="687" y="383" width="1" height="1" fill="#1a8a90"/><rect x="687" y="387" width="1" height="1" fill="#1a8a90"/><rect x="687" y="389" width="1" height="1" fill="#1a8a90"/><rect x="687" y="392" width="1" height="1" fill="#1a8a90"/><rect x="687" y="395" width="1" height="1" fill="#1a8a90"/><rect x="687" y="398" width="1" height="1" fill="#1a8a90"/><rect x="689" y="380" width="1" height="1" fill="#1a8a90"/><rect x="689" y="383" width="1" height="1" fill="#1a8a90"/><rect x="689" y="387" width="1" height="1" fill="#1a8a90"/><rect x="689" y="389" width="1" height="1" fill="#1a8a90"/><rect x="689" y="392" width="1" height="1" fill="#1a8a90"/><rect x="689" y="395" width="1" height="1" fill="#1a8a90"/><rect x="689" y="398" width="1" height="1" fill="#1a8a90"/><rect x="694" y="380" width="1" height="1" fill="#1a8a90"/><rect x="694" y="383" width="1" height="1" fill="#1a8a90"/><rect x="694" y="387" width="1" height="1" fill="#1a8a90"/><rect x="694" y="389" width="1" height="1" fill="#1a8a90"/><rect x="694" y="392" width="1" height="1" fill="#1a8a90"/><rect x="694" y="395" width="1" height="1" fill="#1a8a90"/><rect x="694" y="398" width="1" height="1" fill="#1a8a90"/><rect x="696" y="380" width="1" height="1" fill="#1a8a90"/><rect x="696" y="383" width="1" height="1" fill="#1a8a90"/><rect x="696" y="387" width="1" height="1" fill="#1a8a90"/><rect x="696" y="389" width="1" height="1" fill="#1a8a90"/><rect x="696" y="392" width="1" height="1" fill="#1a8a90"/><rect x="696" y="395" width="1" height="1" fill="#1a8a90"/><rect x="696" y="398" width="1" height="1" fill="#1a8a90"/><rect x="701" y="380" width="1" height="1" fill="#1a8a90"/><rect x="701" y="383" width="1" height="1" fill="#1a8a90"/><rect x="701" y="387" width="1" height="1" fill="#1a8a90"/><rect x="701" y="389" width="1" height="1" fill="#1a8a90"/><rect x="701" y="392" width="1" height="1" fill="#1a8a90"/><rect x="704" y="380" width="1" height="1" fill="#1a8a90"/><rect x="704" y="383" width="1" height="1" fill="#1a8a90"/><rect x="704" y="387" width="1" height="1" fill="#1a8a90"/><rect x="704" y="389" width="1" height="1" fill="#1a8a90"/><rect x="704" y="392" width="1" height="1" fill="#1a8a90"/><rect x="707" y="380" width="1" height="1" fill="#1a8a90"/><rect x="707" y="383" width="1" height="1" fill="#1a8a90"/><rect x="707" y="387" width="1" height="1" fill="#1a8a90"/><rect x="707" y="389" width="1" height="1" fill="#1a8a90"/><rect x="707" y="392" width="1" height="1" fill="#1a8a90"/><rect x="710" y="380" width="1" height="1" fill="#1a8a90"/><rect x="710" y="383" width="1" height="1" fill="#1a8a90"/><rect x="710" y="387" width="1" height="1" fill="#1a8a90"/><rect x="710" y="389" width="1" height="1" fill="#1a8a90"/><rect x="710" y="392" width="1" height="1" fill="#1a8a90"/><rect x="717" y="388" width="1" height="1" fill="#1a8a90"/><rect x="717" y="390" width="1" height="1" fill="#1a8a90"/><rect x="717" y="395" width="1" height="1" fill="#1a8a90"/><rect x="717" y="397" width="1" height="1" fill="#1a8a90"/><rect x="717" y="399" width="1" height="1" fill="#1a8a90"/><rect x="719" y="388" width="1" height="1" fill="#1a8a90"/><rect x="719" y="390" width="1" height="1" fill="#1a8a90"/><rect x="719" y="395" width="1" height="1" fill="#1a8a90"/><rect x="719" y="397" width="1" height="1" fill="#1a8a90"/><rect x="719" y="399" width="1" height="1" fill="#1a8a90"/><rect x="724" y="388" width="1" height="1" fill="#1a8a90"/><rect x="724" y="390" width="1" height="1" fill="#1a8a90"/><rect x="724" y="395" width="1" height="1" fill="#1a8a90"/><rect x="724" y="397" width="1" height="1" fill="#1a8a90"/><rect x="724" y="399" width="1" height="1" fill="#1a8a90"/><rect x="726" y="388" width="1" height="1" fill="#1a8a90"/><rect x="726" y="390" width="1" height="1" fill="#1a8a90"/><rect x="726" y="395" width="1" height="1" fill="#1a8a90"/><rect x="726" y="397" width="1" height="1" fill="#1a8a90"/><rect x="726" y="399" width="1" height="1" fill="#1a8a90"/><rect x="732" y="388" width="1" height="1" fill="#1a8a90"/><rect x="732" y="390" width="1" height="1" fill="#1a8a90"/><rect x="732" y="395" width="1" height="1" fill="#1a8a90"/><rect x="732" y="397" width="1" height="1" fill="#1a8a90"/><rect x="732" y="399" width="1" height="1" fill="#1a8a90"/><rect x="734" y="388" width="1" height="1" fill="#1a8a90"/><rect x="734" y="390" width="1" height="1" fill="#1a8a90"/><rect x="734" y="395" width="1" height="1" fill="#1a8a90"/><rect x="734" y="397" width="1" height="1" fill="#1a8a90"/><rect x="734" y="399" width="1" height="1" fill="#1a8a90"/><rect x="739" y="388" width="1" height="1" fill="#1a8a90"/><rect x="739" y="390" width="1" height="1" fill="#1a8a90"/><rect x="739" y="395" width="1" height="1" fill="#1a8a90"/><rect x="739" y="397" width="1" height="1" fill="#1a8a90"/><rect x="739" y="399" width="1" height="1" fill="#1a8a90"/><rect x="741" y="388" width="1" height="1" fill="#1a8a90"/><rect x="741" y="390" width="1" height="1" fill="#1a8a90"/><rect x="741" y="395" width="1" height="1" fill="#1a8a90"/><rect x="741" y="397" width="1" height="1" fill="#1a8a90"/><rect x="741" y="399" width="1" height="1" fill="#1a8a90"/><rect x="700" y="394" width="13" height="7" fill="#212830"/><rect x="704" y="410" width="11" height="2" fill="#ffffff"/><rect x="704" y="413" width="10" height="1" fill="#ffffff"/><rect x="714" y="411" width="4" height="2" fill="#ffffff"/><rect x="664" y="417" width="1" height="30" fill="#ff0000"/><rect x="674" y="417" width="1" height="30" fill="#ff0000"/><rect x="662" y="418" width="18" height="1" fill="#ff0000"/><rect x="661" y="443" width="19" height="1" fill="#ff0000"/><rect x="692" y="417" width="1" height="30" fill="#ff0000"/><rect x="702" y="417" width="1" height="30" fill="#ff0000"/><rect x="690" y="418" width="18" height="1" fill="#ff0000"/><rect x="689" y="443" width="19" height="1" fill="#ff0000"/><rect x="720" y="417" width="1" height="30" fill="#ff0000"/><rect x="730" y="417" width="1" height="30" fill="#ff0000"/><rect x="718" y="418" width="18" height="1" fill="#ff0000"/><rect x="717" y="443" width="19" height="1" fill="#ff0000"/><rect x="663" y="452" width="14" height="2" fill="#ffffff"/><rect x="678" y="452" width="2" height="1" fill="#ffffff"/><rect x="663" y="454" width="15" height="1" fill="#00ff00"/><rect x="688" y="452" width="13" height="2" fill="#ffffff"/><rect x="702" y="452" width="5" height="1" fill="#ffffff"/><rect x="688" y="454" width="15" height="1" fill="#00ff00"/><rect x="718" y="452" width="14" height="3" fill="#ffffff"/><rect x="733" y="452" width="4" height="1" fill="#ffffff"/><rect x="718" y="454" width="15" height="1" fill="#00ff00"/><rect x="749" y="420" width="2" height="13" fill="#ffffff"/><rect x="761" y="420" width="7" height="1" fill="#ffffff"/><rect x="761" y="431" width="7" height="1" fill="#ffffff"/><rect x="754" y="447" width="10" height="2" fill="#ffffff"/><rect x="763" y="448" width="4" height="1" fill="#ffffff"/><rect x="835" y="364" width="139" height="3" fill="#ffffff"/><rect x="835" y="364" width="1" height="98" fill="#ffffff"/><rect x="839" y="364" width="2" height="98" fill="#ffffff"/><rect x="971" y="364" width="1" height="98" fill="#ffffff"/><rect x="973" y="364" width="1" height="98" fill="#ffffff"/><rect x="972" y="364" width="1" height="98" fill="#5a5e64"/><rect x="835" y="460" width="139" height="2" fill="#ffffff"/><rect x="942" y="453" width="30" height="8" fill="#ffffff"/><rect x="943" y="454" width="10" height="2" fill="#3a3f46"/><rect x="953" y="454" width="4" height="2" fill="#3a3f46"/><rect x="957" y="454" width="9" height="2" fill="#3a3f46"/><rect x="966" y="455" width="1" height="1" fill="#3a3f46"/><rect x="968" y="455" width="3" height="1" fill="#3a3f46"/><rect x="950" y="457" width="16" height="3" fill="#212830"/><rect x="943" y="458" width="1" height="1" fill="#3a3f46"/><rect x="945" y="458" width="5" height="1" fill="#3a3f46"/><rect x="966" y="458" width="1" height="1" fill="#3a3f46"/><rect x="968" y="458" width="3" height="1" fill="#3a3f46"/><rect x="852" y="369" width="43" height="1" fill="#ff0000"/><rect x="855" y="370" width="40" height="1" fill="#ffffff"/><rect x="855" y="370" width="2" height="27" fill="#ffffff"/><rect x="855" y="375" width="3" height="20" fill="#00ffff"/><rect x="855" y="381" width="3" height="3" fill="#ffffff"/><rect x="855" y="388" width="3" height="3" fill="#ffffff"/><rect x="868" y="370" width="1" height="31" fill="#ff0000"/><rect x="880" y="370" width="2" height="31" fill="#ff0000"/><rect x="893" y="370" width="1" height="31" fill="#ff0000"/><rect x="856" y="396" width="1" height="6" fill="#ff0000"/><rect x="868" y="370" width="27" height="1" fill="#ff0000"/><rect x="868" y="377" width="27" height="1" fill="#ff0000"/><rect x="868" y="370" width="1" height="8" fill="#ff0000"/><rect x="894" y="370" width="1" height="8" fill="#ff0000"/><rect x="868" y="377" width="39" height="1" fill="#ffffff"/><rect x="868" y="378" width="39" height="1" fill="#ff0000"/><rect x="905" y="377" width="1" height="20" fill="#ffffff"/><rect x="906" y="377" width="1" height="20" fill="#ff0000"/><rect x="857" y="386" width="49" height="1" fill="#ffffff"/><rect x="857" y="387" width="49" height="1" fill="#ff0000"/><rect x="852" y="395" width="59" height="1" fill="#ffffff"/><rect x="893" y="395" width="14" height="2" fill="#00ff00"/><path d="M867 376 L858 382 L867 387" fill="none" stroke="#00ffff" stroke-width="3.5"/><path d="M867 388 L858 392 L867 396" fill="none" stroke="#00ffff" stroke-width="3.5"/><path d="M858 383 L867 388" fill="none" stroke="#ffffff" stroke-width="1.2"/><path d="M858 393 L866 396" fill="none" stroke="#ffffff" stroke-width="1.2"/><rect x="868" y="397" width="1" height="5" fill="#ff0000"/><rect x="880" y="397" width="1" height="5" fill="#ff0000"/><rect x="893" y="397" width="1" height="5" fill="#ff0000"/><rect x="905" y="397" width="1" height="5" fill="#ff0000"/><circle cx="905.5" cy="402" r="1.2" fill="#ff0000"/><rect x="872" y="382" width="4" height="5" fill="#ff0000"/><rect x="873" y="383" width="2" height="4" fill="#ffffff"/><rect x="872" y="391" width="4" height="5" fill="#ff0000"/><rect x="873" y="392" width="2" height="4" fill="#ffffff"/><rect x="872" y="407" width="14" height="2" fill="#ffffff"/><rect x="884" y="407" width="4" height="1" fill="#ffffff"/><rect x="852" y="411" width="44" height="2" fill="#ff0000"/><rect x="855" y="413" width="40" height="1" fill="#ffffff"/><rect x="855" y="413" width="2" height="26" fill="#ffffff"/><rect x="855" y="415" width="3" height="23" fill="#00ffff"/><rect x="855" y="423" width="3" height="3" fill="#ffffff"/><rect x="868" y="413" width="1" height="26" fill="#ff0000"/><rect x="881" y="413" width="3" height="26" fill="#ff0000"/><rect x="893" y="413" width="1" height="26" fill="#ff0000"/><rect x="856" y="421" width="39" height="1" fill="#ffffff"/><rect x="856" y="422" width="39" height="1" fill="#ff0000"/><rect x="856" y="430" width="39" height="1" fill="#ffffff"/><rect x="856" y="431" width="39" height="1" fill="#ff0000"/><rect x="852" y="438" width="59" height="1" fill="#ffffff"/><rect x="894" y="419" width="13" height="1" fill="#ff0000"/><rect x="894" y="438" width="13" height="1" fill="#ff0000"/><rect x="894" y="419" width="1" height="20" fill="#ff0000"/><rect x="906" y="419" width="1" height="20" fill="#ff0000"/><rect x="895" y="420" width="2" height="19" fill="#00ffff"/><rect x="898" y="420" width="7" height="19" fill="#00ffff"/><rect x="895" y="423" width="1" height="1" fill="#1a8a90"/><rect x="899" y="423" width="1" height="1" fill="#1a8a90"/><rect x="903" y="423" width="1" height="1" fill="#1a8a90"/><rect x="895" y="427" width="1" height="1" fill="#1a8a90"/><rect x="899" y="427" width="1" height="1" fill="#1a8a90"/><rect x="903" y="427" width="1" height="1" fill="#1a8a90"/><rect x="895" y="433" width="1" height="1" fill="#1a8a90"/><rect x="899" y="433" width="1" height="1" fill="#1a8a90"/><rect x="903" y="433" width="1" height="1" fill="#1a8a90"/><rect x="895" y="436" width="1" height="1" fill="#1a8a90"/><rect x="899" y="436" width="1" height="1" fill="#1a8a90"/><rect x="903" y="436" width="1" height="1" fill="#1a8a90"/><rect x="894" y="429" width="13" height="1" fill="#ff0000"/><rect x="905" y="419" width="1" height="25" fill="#ff0000"/><rect x="856" y="439" width="1" height="6" fill="#ff0000"/><rect x="868" y="439" width="1" height="6" fill="#ff0000"/><rect x="881" y="439" width="1" height="6" fill="#ff0000"/><rect x="893" y="439" width="1" height="6" fill="#ff0000"/><circle cx="893" cy="445" r="1.2" fill="#ff0000"/><rect x="872" y="425" width="5" height="5" fill="#ff0000"/><rect x="873" y="427" width="3" height="3" fill="#212830"/><rect x="872" y="450" width="14" height="2" fill="#ffffff"/><rect x="884" y="450" width="4" height="1" fill="#ffffff"/><rect x="929" y="379" width="32" height="2" fill="#ff0000"/><rect x="922" y="382" width="10" height="1" fill="#ff0000"/><rect x="932" y="382" width="2" height="53" fill="#ffffff"/><rect x="932" y="382" width="29" height="1" fill="#ffffff"/><rect x="957" y="382" width="2" height="53" fill="#ff0000"/><rect x="956" y="382" width="1" height="53" fill="#ffffff"/><rect x="960" y="378" width="1" height="62" fill="#ffffff"/><rect x="931" y="393" width="2" height="29" fill="#00ffff"/><rect x="931" y="405" width="3" height="2" fill="#ffffff"/><rect x="931" y="421" width="3" height="2" fill="#ffffff"/><path d="M936 407.5 L955 416" fill="none" stroke="#ffffff" stroke-width="3"/><path d="M955 394 L937.5 404 L953 411.5" fill="none" stroke="#00ffff" stroke-width="4.5"/><path d="M936 425.5 L955 434" fill="none" stroke="#ffffff" stroke-width="3"/><path d="M955 412 L937.5 422 L953 429.5" fill="none" stroke="#00ffff" stroke-width="4.5"/><rect x="954" y="397" width="7" height="1" fill="#ffffff"/><rect x="954" y="415" width="7" height="1" fill="#ffffff"/><rect x="922" y="432" width="10" height="1" fill="#ff0000"/><rect x="921" y="434" width="12" height="1" fill="#ffffff"/><rect x="932" y="432" width="29" height="1" fill="#ffffff"/><rect x="932" y="433" width="1" height="6" fill="#ff0000"/><rect x="957" y="433" width="1" height="6" fill="#ff0000"/><rect x="939" y="443" width="10" height="2" fill="#ffffff"/><rect x="948" y="443" width="3" height="1" fill="#ffffff"/><path d="M958 401 L961 405 L958 409" fill="none" stroke="#ffffff" stroke-width="0.8"/></g></svg><!--/DRAW-->
</body></html>
